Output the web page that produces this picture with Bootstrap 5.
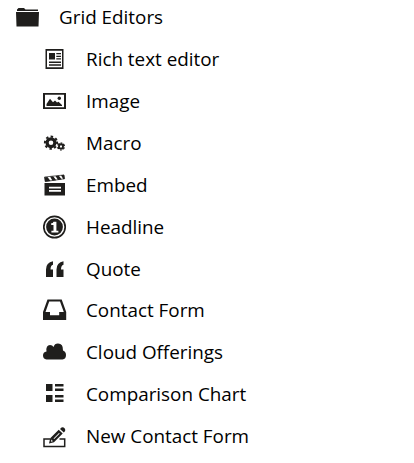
<!DOCTYPE html>
<html lang="en">
<head>
<meta charset="utf-8">
<meta name="viewport" content="width=device-width, initial-scale=1">
<title>Grid Editors</title>
<link href="https://cdn.jsdelivr.net/npm/bootstrap@5.3.0/dist/css/bootstrap.min.css" rel="stylesheet">
<style>
body{font-family:"Open Sans",sans-serif;font-size:18.850px;line-height:26px;color:#000;background:#fff;overflow:hidden}
.tree-root{height:34px;padding-left:16px}
.tree-items{padding:4.230px 0 0 43px}
.tree-item{height:41.880px}
.tree-icon{width:24px;height:24px;flex:none;margin-right:19px;fill:#1f1e1c}
</style>
</head>
<body>
<nav>
<div class="tree-root d-flex align-items-center text-nowrap"><svg class="tree-icon" viewBox="0 -1 24 24"><path d="M1 5V3.500L2.500 2H8l1.500 1.500H22V5zM0 6H23L22.500 20.500H.5z"/></svg><span>Grid Editors</span></div>
<ul class="tree-items list-unstyled mb-0 text-nowrap">
<li class="tree-item d-flex align-items-center"><svg class="tree-icon" viewBox="7 5 24 24"><path fill-rule="evenodd" d="M9.500 7H27.500V27H9.500zM11 8.700V25.300H26V8.700zM13 11h6v6.500h-6zM20.300 11H25v1.300h-4.700zM20.300 13.700H25V15h-4.700zM20.300 16.300H25v1.300h-4.700zM13 19.500H25V21H13zM13 22.300H25v1.400H13z"/></svg><span>Rich text editor</span></li>
<li class="tree-item d-flex align-items-center"><svg class="tree-icon" viewBox="7 5 24 24"><path fill-rule="evenodd" d="M7 9H30V25H7zM9 10.800V23.200H28V10.800z"/><path d="M10.500 22V20l3.500-5.200 3 3.400 2-1.700 2 2 1.500-.8 3.500 3.300v1z"/><circle cx="23.300" cy="14.300" r="1.700"/></svg><span>Image</span></li>
<li class="tree-item d-flex align-items-center"><svg class="tree-icon" viewBox="7 5 24 24"><g fill="none" stroke="#1f1e1c"><circle cx="15" cy="16.700" r="3.900" stroke-width="3.200"/><circle cx="15" cy="16.700" r="6.100" stroke-width="2" stroke-dasharray="2.400 2.391" transform="rotate(-10 15 16.700)"/><path d="M23.200 18.200l3.900.3-.3 4-3.900-.3z" stroke-width="1.900"/><circle cx="25" cy="20.500" r="3.400" stroke-width="1.300" stroke-dasharray="1.700 1.860" transform="rotate(15 25 20.500)"/></g></svg><span>Macro</span></li>
<li class="tree-item d-flex align-items-center"><svg class="tree-icon" viewBox="7 5 24 24"><path d="M8.500 9.300l3-.4 3 4-5.300.8zM14 8.600l3.200-.4 3 4-3.700.5zM19.500 7.900l3.200-.4 3 4-3.700.5zM25 7.200l3-.4.6 4.200-1.300.2z"/><path d="M8.500 9l.7 4.600 19.400-2.900-.6-3.700z" fill="none" stroke="#1f1e1c" stroke-width=".7"/><path fill-rule="evenodd" d="M8.500 15H29V27.500H8.500zM13 18.700v1.800H25v-1.800zM13 22v1.700H25V22z"/></svg><span>Embed</span></li>
<li class="tree-item d-flex align-items-center"><svg class="tree-icon" viewBox="7 5 24 24"><circle cx="18.500" cy="17" r="10.700" fill="none" stroke="#1f1e1c" stroke-width="1.700"/><circle cx="18.500" cy="17" r="8.400"/><path fill="#fff" d="M17.500 11.700h2.900v9h2v1.800h-7v-1.800h2.100v-5.800h-2.300v-1.600q2-.1 2.300-1.600z"/></svg><span>Headline</span></li>
<li class="tree-item d-flex align-items-center"><svg class="tree-icon" viewBox="7 5 24 24"><path id="quote-mark" d="M10 25v-7.500Q10 10.500 17 9.300v3.500q-2.500.8-2.500 4.700H17V25z"/><use href="#quote-mark" x="10.500"/></svg><span>Quote</span></li>
<li class="tree-item d-flex align-items-center"><svg class="tree-icon" viewBox="7 5 24 24"><path fill-rule="evenodd" d="M11.500 6.500H25.700L30.200 19V27H7V19zM13.200 8.500L9.500 19H14V22.200H23.200V19H27.800L24 8.500z"/></svg><span>Contact Form</span></li>
<li class="tree-item d-flex align-items-center"><svg class="tree-icon" viewBox="7 5 24 24"><path d="M10.500 24.500Q7 24 7 20.300 7 17.300 10.500 16.500 9.700 10 14 10q2.500 0 3.500 2Q18.700 8.500 22 8.600q5.300.2 5 6.900 3 1.300 3 4.500 0 4-3.500 4.500z"/></svg><span>Cloud Offerings</span></li>
<li class="tree-item d-flex align-items-center"><svg class="tree-icon" viewBox="7 5 24 24"><path d="M10 7h6.500v7H10zM10 18h6.500v7H10zM19 7h8.500v2.500H19zM19 11.500h8.500V14H19zM19 18h8.500v2.500H19zM19 22.500h8.500V25H19z"/></svg><span>Comparison Chart</span></li>
<li class="tree-item d-flex align-items-center"><svg class="tree-icon" viewBox="7 4 24 24"><path d="M14 19H8V26.500H28.700V19H23.500" fill="none" stroke="#1f1e1c" stroke-width="1.500"/><path fill-rule="evenodd" d="M13 23.500l1.200-5.200L22.700 9.800l4 3.800-8.700 8.700zM15.500 19.400l-.6 2.400 2-.6zM17.500 18.400l.7.7 5.500-5.500-.7-.7z"/><path d="M24 8.900l1.500-1.500q1.700-.7 3.100.8 1.100 1.400.5 2.900L27.800 12.500z"/></svg><span>New Contact Form</span></li>
</ul>
</nav>
<script src="https://cdn.jsdelivr.net/npm/bootstrap@5.3.0/dist/js/bootstrap.bundle.min.js"></script>
</body>
</html>
